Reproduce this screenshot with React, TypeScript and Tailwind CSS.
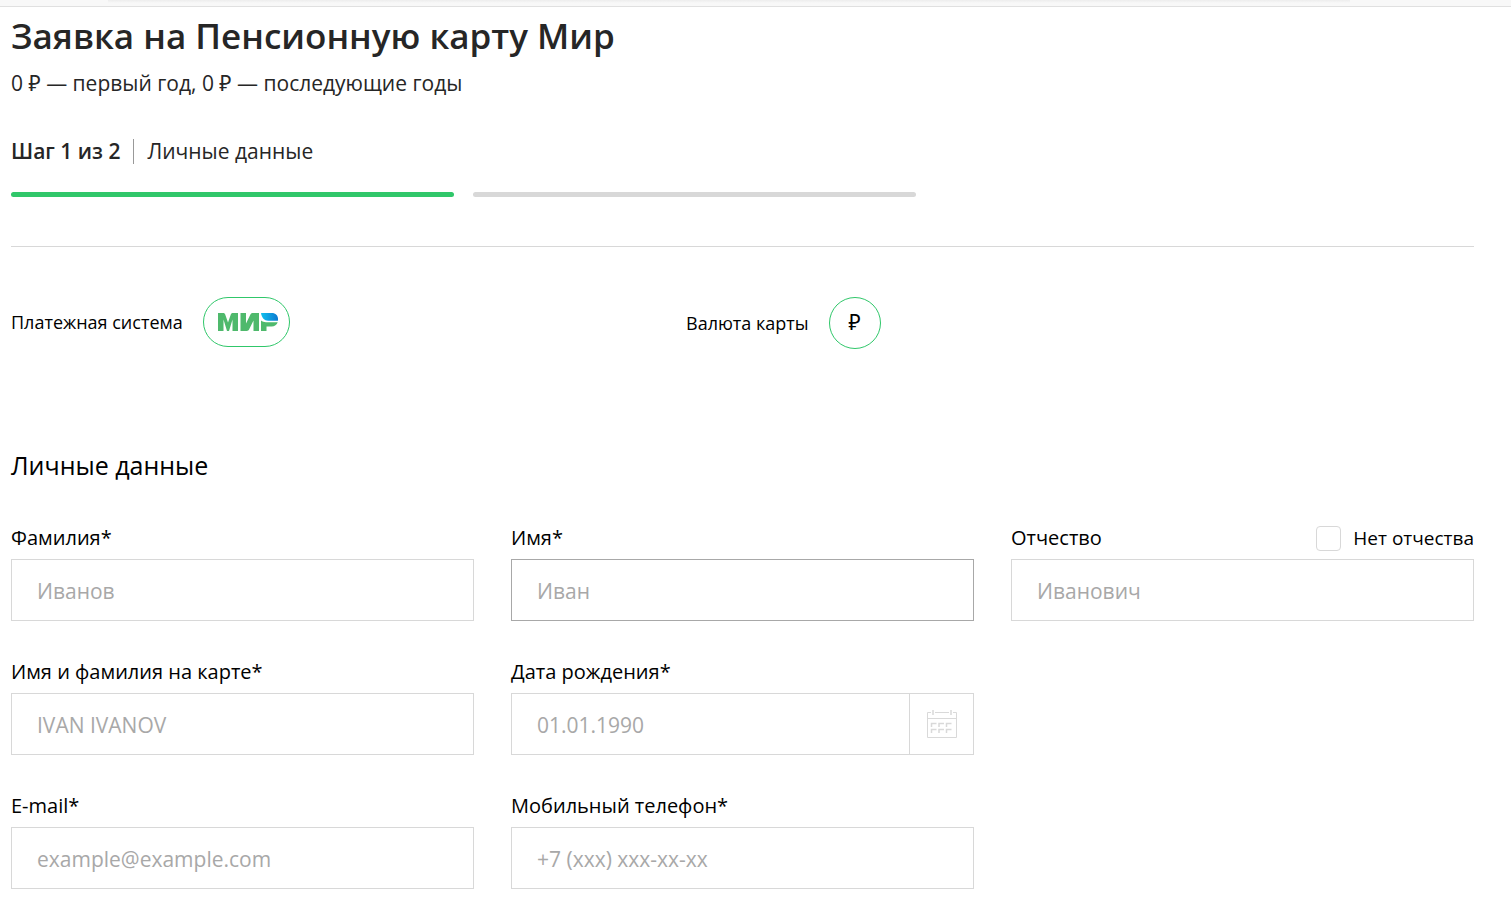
import type { ReactNode } from "react";

type FieldProps = {
  id: string;
  label: string;
  placeholder: string;
  type?: string;
  active?: boolean;
  className?: string;
  aside?: ReactNode;
  action?: ReactNode;
};

const Field = ({ id, label, placeholder, type = "text", active = false, className, aside, action }: FieldProps) => {
  return (
    <div className={className}>
      <div className="flex h-[42px] items-center justify-between">
        <label htmlFor={id} className="text-[20px] leading-7">
          {label}
        </label>
        {aside}
      </div>
      <div className={`flex h-[62px] border bg-white ${active ? "border-[#a8a8a8]" : "border-[#d8d8d8]"}`}>
        <input
          id={id}
          type={type}
          placeholder={placeholder}
          className="h-full w-full min-w-0 px-[25px] pt-0.5 text-[21px] outline-none placeholder:text-[#a8a8a8]"
        />
        {action}
      </div>
    </div>
  );
};

const CalendarIcon = () => {
  return (
    <svg width="30" height="28" viewBox="0 0 30 28" fill="none" stroke="#d9d9d9" aria-hidden="true">
      <path d="M4 2.500H.5v25h29v-25H26M8 2.500h14M0 8.500h30" />
      <path d="M6 0v5M24 0v5" stroke="#e2e2e2" strokeWidth="2" />
      <path
        d="M4.500 17v-3.500h5M12 17v-3.500h5M19.500 17v-3.500h5M4.500 23v-3.500h5M12 23v-3.500h5M19.500 23v-3.500h5"
        strokeWidth="1.500"
      />
    </svg>
  );
};

const MirLogo = () => {
  return (
    <svg width="60" height="18" viewBox="0 0 60 18" role="img" aria-label="МИР">
      <defs>
        <linearGradient id="mir-wing" x1="43" y1="0" x2="60" y2="0" gradientUnits="userSpaceOnUse">
          <stop offset="0" stopColor="#0fc0ee" />
          <stop offset="1" stopColor="#0c79d0" />
        </linearGradient>
      </defs>
      <g fill="#4fb96c">
        <path d="M0 18V0h5.200c1 0 1.700.5 2 1.500L10 9.500l2.800-8c.3-1 1-1.500 2-1.500H20v18h-5.500V6.500L11 18H9L5.500 6.500V18z" />
        <path d="M22.500 18V0H28v10.500l4.300-8.800C32.800.600 33.600 0 34.700 0H41v18h-5.500V7.500l-4.300 8.800c-.5 1.100-1.300 1.700-2.400 1.700z" />
        <path d="M43 7.600c1.400 1 3.100 1.600 5 1.600h11.700c-.8 2.600-3.100 4.300-6.100 4.300h-5.100V18H43z" />
      </g>
      <path d="M43 0h10.800C57.600 0 60 2.600 60 6c0 .7 0 1.300-.1 1.700H50c-3.600 0-6.300-2.900-7-7.700z" fill="url(#mir-wing)" />
    </svg>
  );
};

export default function App() {
  return (
    <div className="min-h-screen bg-white font-['Open_Sans','Noto_Sans',sans-serif] text-black">
      <div className="h-[7px] border-b border-[#e0e0e0] bg-[#f8f8f8]">
        <div className="mr-[161px] ml-[108px] h-[3px] bg-linear-to-b from-[#ededed] to-[#f8f8f8]" />
      </div>

      <main className="pr-[37px] pb-6 pl-[11px]">
        <header className="border-b border-[#d8d8d8] pt-[5px] pb-[49px] text-[#262626]">
          <h1 className="text-[35px] leading-12 font-semibold">Заявка на Пенсионную карту Мир</h1>
          <p className="mt-[7px] text-[21px] leading-8">0 ₽ — первый год, 0 ₽ — последующие годы</p>

          <div className="mt-9 flex items-center text-[21px] leading-8">
            <span className="font-semibold">Шаг 1 из 2</span>
            <span className="mx-[13px] h-[25px] w-px bg-[#999999]" />
            <span>Личные данные</span>
          </div>
          <div className="mt-[25px] flex max-w-[905px] gap-[19px]">
            <div className="h-[5px] flex-1 rounded-full bg-[#30c76a]" />
            <div className="h-[5px] flex-1 rounded-full bg-[#d8d8d8]" />
          </div>
        </header>

        <form>
          <div className="grid grid-cols-[675fr_788fr] items-start pt-[50px] text-[18px]">
            <div className="flex items-center gap-5">
              <span>Платежная система</span>
              <button
                type="button"
                className="flex h-[50px] w-[87px] items-center justify-center rounded-full border border-[#30c76a] pl-1"
              >
                <MirLogo />
              </button>
            </div>
            <div className="flex items-center gap-5">
              <span>Валюта карты</span>
              <button
                type="button"
                className="flex size-[52px] items-center justify-center rounded-full border border-[#30c76a] text-[21px]"
              >
                ₽
              </button>
            </div>
          </div>

          <h2 className="mt-[98px] text-[25px] leading-9">Личные данные</h2>

          <div className="mt-[34px] grid grid-cols-3 gap-x-[37px] gap-y-[30px]">
            <Field id="last-name" label="Фамилия*" placeholder="Иванов" />
            <Field id="first-name" label="Имя*" placeholder="Иван" active />
            <Field
              id="middle-name"
              label="Отчество"
              placeholder="Иванович"
              aside={
                <label className="flex items-center gap-3 text-[19px] leading-7">
                  <input
                    type="checkbox"
                    className="size-[25px] appearance-none rounded-[4px] border border-[#d8d8d8] bg-white checked:bg-[#30c76a]"
                  />
                  Нет отчества
                </label>
              }
            />
            <Field id="card-name" label="Имя и фамилия на карте*" placeholder="IVAN IVANOV" />
            <Field
              id="birth-date"
              label="Дата рождения*"
              placeholder="01.01.1990"
              action={
                <button
                  type="button"
                  aria-label="Открыть календарь"
                  className="flex w-16 shrink-0 items-center justify-center border-l border-[#d8d8d8]"
                >
                  <CalendarIcon />
                </button>
              }
            />
            <Field
              id="email"
              label="E-mail*"
              placeholder="example@example.com"
              type="email"
              className="col-start-1"
            />
            <Field id="phone" label="Мобильный телефон*" placeholder="+7 (xxx) xxx-xx-xx" type="tel" />
          </div>
        </form>
      </main>
    </div>
  );
}
